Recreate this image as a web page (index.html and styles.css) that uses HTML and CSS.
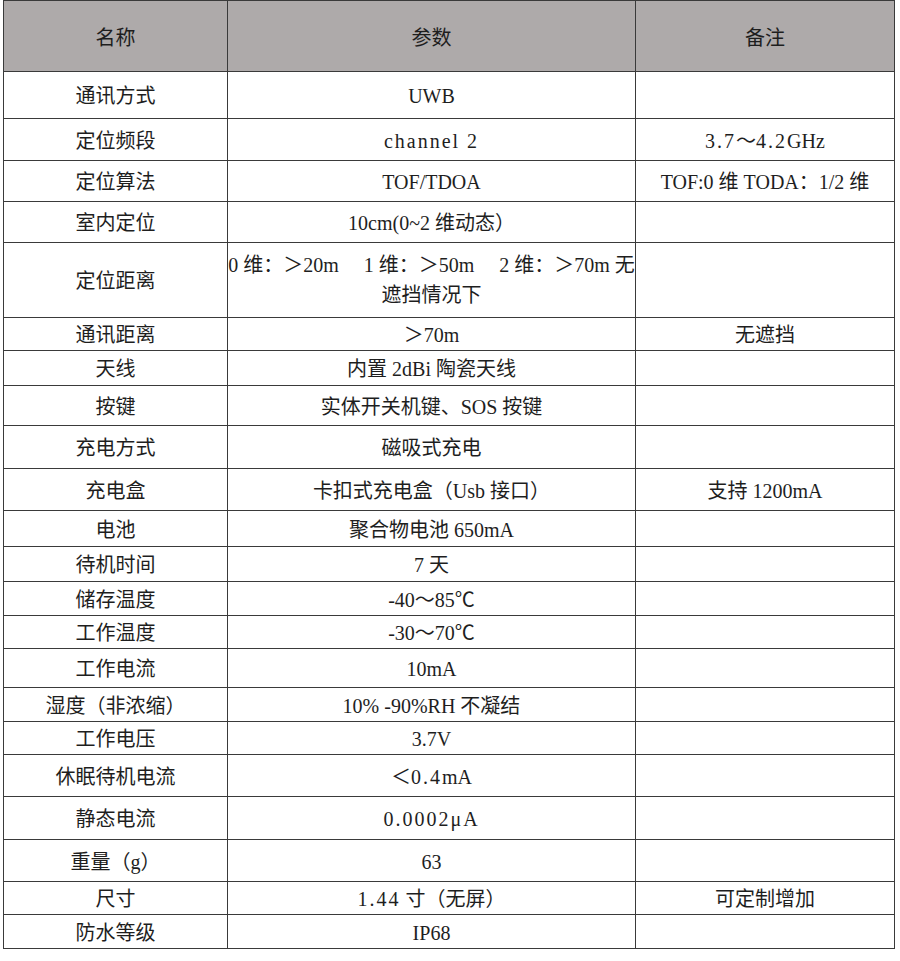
FILE: index.html
```html
<!DOCTYPE html>
<html lang="zh-CN">
<head>
<meta charset="utf-8">
<title>参数表</title>
<link rel="stylesheet" href="styles.css">
</head>
<body>
<table class="spec">
  <colgroup>
    <col class="c-name">
    <col class="c-param">
    <col class="c-note">
  </colgroup>
  <thead>
    <tr class="h71"><th>名称</th><th>参数</th><th>备注</th></tr>
  </thead>
  <tbody>
    <tr class="h47"><td>通讯方式</td><td>UWB</td><td></td></tr>
    <tr class="h42"><td>定位频段</td><td><span class="m">channel 2</span></td><td><span class="m">3.7</span>～<span class="m">4.2</span>GHz</td></tr>
    <tr class="h41"><td>定位算法</td><td>TOF/TDOA</td><td>TOF:0 维 TODA：1/2 维</td></tr>
    <tr class="h41"><td>室内定位</td><td>10cm(0~2 维动态）</td><td></td></tr>
    <tr class="h75"><td>定位距离</td><td class="wide">0 维：＞20m　 1 维：＞50m　 2 维：＞70m 无<br>遮挡情况下</td><td></td></tr>
    <tr class="h33"><td>通讯距离</td><td>＞70m</td><td>无遮挡</td></tr>
    <tr class="h35"><td>天线</td><td>内置 2dBi 陶瓷天线</td><td></td></tr>
    <tr class="h40"><td>按键</td><td>实体开关机键、SOS 按键</td><td></td></tr>
    <tr class="h43"><td>充电方式</td><td>磁吸式充电</td><td></td></tr>
    <tr class="h42"><td>充电盒</td><td>卡扣式充电盒（Usb 接口）</td><td>支持 1200mA</td></tr>
    <tr class="h36"><td>电池</td><td>聚合物电池 650mA</td><td></td></tr>
    <tr class="h35"><td>待机时间</td><td>7 天</td><td></td></tr>
    <tr class="h34"><td>储存温度</td><td>-40～85℃</td><td></td></tr>
    <tr class="h33"><td>工作温度</td><td>-30～70℃</td><td></td></tr>
    <tr class="h39"><td>工作电流</td><td>10mA</td><td></td></tr>
    <tr class="h34"><td>湿度（非浓缩）</td><td>10% -90%RH 不凝结</td><td></td></tr>
    <tr class="h33"><td>工作电压</td><td>3.7V</td><td></td></tr>
    <tr class="h42"><td>休眠待机电流</td><td>＜<span class="m">0.4</span>mA</td><td></td></tr>
    <tr class="h43"><td>静态电流</td><td><span class="m">0.0002μA</span></td><td></td></tr>
    <tr class="h42"><td>重量（g）</td><td>63</td><td></td></tr>
    <tr class="h33"><td>尺寸</td><td><span class="m">1.44</span> 寸（无屏）</td><td>可定制增加</td></tr>
    <tr class="h34"><td>防水等级</td><td>IP68</td><td></td></tr>
  </tbody>
</table>
</body>
</html>
```
FILE: styles.css
```css
html, body {
  margin: 0;
  padding: 0;
  background: #ffffff;
}

body {
  padding-left: 3px;
}

.spec {
  border-collapse: collapse;
  table-layout: fixed;
  width: 891px;
  font-family: "Liberation Serif", "Noto Sans CJK SC", serif;
  font-size: 20px;
  color: #1e1e1e;
  border: 1px solid #6f6f6f;
}

.c-name { width: 224px; }
.c-param { width: 408px; }
.c-note { width: 259px; }

.spec th,
.spec td {
  border: 1px solid #3a3a3a;
  padding: 2px 0 0;
  text-align: center;
  vertical-align: middle;
  font-weight: normal;
  line-height: 30px;
  white-space: nowrap;
}

.spec th {
  background: #aeaaaa;
  padding-top: 4px;
}

.spec td.wide {
  white-space: normal;
  padding-top: 0;
}

.m {
  letter-spacing: 2px;
}

.h71 { height: 71px; }
.h75 { height: 75px; }
.h47 { height: 47px; }
.h43 { height: 43px; }
.h42 { height: 42px; }
.h41 { height: 41px; }
.h40 { height: 40px; }
.h39 { height: 39px; }
.h36 { height: 36px; }
.h35 { height: 35px; }
.h34 { height: 34px; }
.h33 { height: 33px; }
```
